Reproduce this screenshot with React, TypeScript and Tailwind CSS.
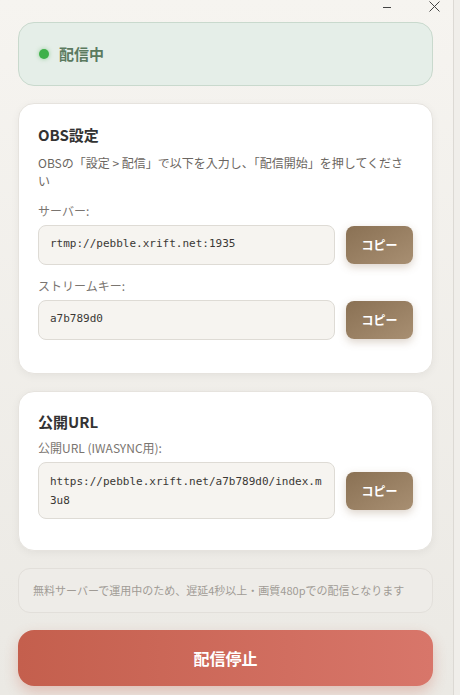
const jp = "font-['Noto_Sans_CJK_JP','Noto_Sans',sans-serif]"
const mono = "font-['DejaVu_Sans_Mono','Noto_Sans_CJK_JP',monospace]"

function CopyButton() {
  return (
    <button className="w-[67px] h-[38px] shrink-0 rounded-lg bg-gradient-to-br from-[#8a7154] to-[#a88f72] text-white text-[12px] font-bold shadow-[0_3px_8px_rgba(140,110,80,0.3)]">
      コピー
    </button>
  )
}

function Field({ label, value, tall }: { label: string; value: string; tall?: boolean }) {
  return (
    <div>
      <div className="text-[12px] text-[#7a7570] mb-[5px]">{label}</div>
      <div className="flex items-center gap-[11px]">
        <div
          className={`flex-1 rounded-lg border border-[#dedbd5] bg-[#f6f4f0] px-[11px] ${mono} text-[11px] text-[#3a3835] break-all ${
            tall ? 'pt-[9px] pb-[8px] leading-[19px]' : 'h-[40px] flex items-center'
          }`}
        >
          {value}
        </div>
        <CopyButton />
      </div>
    </div>
  )
}

export default function App() {
  return (
    <div className={`relative min-h-[695px] w-[460px] bg-gradient-to-b from-[#f6f4f0] to-[#ebe9e4] ${jp}`}>
      <div className="absolute right-0 top-0 h-full w-[7px] border-l border-[#dcd9d4] bg-[#f0eeea]" />
      <div className="flex h-[22px] items-start justify-end gap-[38px] pr-[20px] pt-[1px]">
        <svg width="8" height="12" viewBox="0 0 8 12">
          <path d="M0 6.5h8" stroke="#444" strokeWidth="1" />
        </svg>
        <svg width="11" height="11" viewBox="0 0 11 11">
          <path d="M0.5 0.5l10 10M10.5 0.5l-10 10" stroke="#444" strokeWidth="1" />
        </svg>
      </div>
      <div className="flex w-[442px] flex-col gap-[17px] pl-[18px] pr-[9px]">
        <div className="flex h-[64px] items-center gap-[10px] rounded-2xl border border-[#c9d9cd] bg-[#e5eee8] px-[20px]">
          <span className="h-[10px] w-[10px] rounded-full bg-[#3fb04a] shadow-[0_0_4px_rgba(63,176,74,0.5)]" />
          <span className="text-[15px] font-bold text-[#5b7a5f]">配信中</span>
        </div>

        <div className="rounded-2xl border border-[#e6e3de] bg-white px-[19px] pt-[20px] pb-[33px] shadow-[0_2px_8px_rgba(0,0,0,0.05)]">
          <div className="text-[15px] font-semibold text-[#333]">OBS設定</div>
          <p className="mt-[7px] text-[12px] leading-[18px] text-[#6b6661]">
            OBSの「設定 &gt; 配信」で以下を入力し、「配信開始」を押してください
          </p>
          <div className="mt-[12px] flex flex-col gap-[12px]">
            <Field label="サーバー:" value="rtmp://pebble.xrift.net:1935" />
            <Field label="ストリームキー:" value="a7b789d0" />
          </div>
        </div>

        <div className="rounded-2xl border border-[#e6e3de] bg-white px-[19px] pt-[19px] pb-[31px] shadow-[0_2px_8px_rgba(0,0,0,0.05)]">
          <div className="text-[15px] font-semibold text-[#333]">公開URL</div>
          <div className="mt-[6px]">
            <Field label="公開URL (IWASYNC用):" value="https://pebble.xrift.net/a7b789d0/index.m3u8" tall />
          </div>
        </div>

        <div className="flex h-[45px] items-center rounded-xl border border-[#e2dfda] bg-[#eeece8] px-[14px] text-[11px] whitespace-nowrap text-[#a09b95]">
          無料サーバーで運用中のため、遅延4秒以上・画質480pでの配信となります
        </div>

        <button className="h-[56px] w-full rounded-2xl bg-gradient-to-r from-[#c45f4d] to-[#d8766a] text-[16px] font-bold text-white shadow-[0_6px_14px_rgba(200,95,77,0.3)]">
          配信停止
        </button>
      </div>
    </div>
  )
}
